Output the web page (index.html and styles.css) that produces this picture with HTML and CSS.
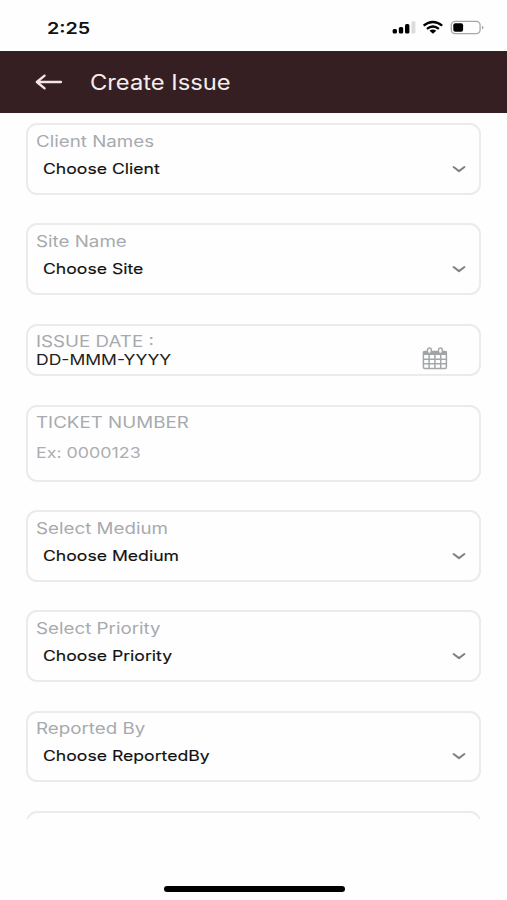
FILE: index.html
```html
<!DOCTYPE html>
<html lang="en">
<head>
<meta charset="utf-8">
<title>Create Issue</title>
<link rel="stylesheet" href="styles.css">
</head>
<body>
<div class="screen">
  <div class="status">
    <span class="time">2:25</span>
    <svg class="indicators" width="92" height="16" viewBox="0 0 92 16">
      <rect x="0.6" y="9" width="4.4" height="4.6" rx="1.5"/>
      <rect x="6.8" y="7" width="4.4" height="6.6" rx="1.5"/>
      <rect x="13" y="4" width="4.4" height="9.6" rx="1.5"/>
      <rect x="19.4" y="1.3" width="4" height="12.3" rx="1.3" fill="#dcdcdc"/>
      <g fill="none" stroke="#000" stroke-width="2.3">
        <path d="M31.6 5.6Q40.9-1.6 50.2 5.6"/>
        <path d="M34.9 8.8Q40.9 4.2 46.9 8.8"/>
      </g>
      <path d="M37.5 10.7Q40.9 8.3 44.3 10.7L40.9 13.8Z"/>
      <rect x="59.3" y="1.4" width="28.8" height="12.2" rx="3.8" fill="none" stroke="#a7a7a7" stroke-width="1.3"/>
      <rect x="61.3" y="3.2" width="9.8" height="8.6" rx="2"/>
      <path d="M90 5.7Q92.8 7.5 90 9.3Z" fill="#999"/>
    </svg>
  </div>
  <header class="bar">
    <svg class="back" width="28" height="18" viewBox="0 0 28 18"><path d="M26 9H2M9.6 2.6L1.8 9L9.6 15.4"/></svg>
    <h1 class="title">Create Issue</h1>
  </header>
  <main class="form">
    <div class="field">
      <span class="label">Client Names</span>
      <div class="select"><span class="value">Choose Client</span><svg class="chevron" width="14" height="8" viewBox="0 0 14 8"><path d="M1.6 2L7 6.1L12.4 2"/></svg></div>
    </div>
    <div class="field">
      <span class="label">Site Name</span>
      <div class="select"><span class="value">Choose Site</span><svg class="chevron" width="14" height="8" viewBox="0 0 14 8"><path d="M1.6 2L7 6.1L12.4 2"/></svg></div>
    </div>
    <div class="field date">
      <div class="date-text"><span class="label">ISSUE DATE :</span><span class="date-value">DD-MMM-YYYY</span></div>
      <svg class="calendar" width="26" height="23" viewBox="0 0 26 23">
        <rect x="1.4" y="4.6" width="23" height="16.9" rx="1.5"/>
        <path class="cal-head" d="M1 4.3H25V8H1Z"/>
        <path d="M1.4 12.2H24.4M1.4 16.8H24.4M7.1 7V21.5M12.9 7V21.5M18.7 7V21.5"/>
        <rect class="ring" x="5.5" y="1" width="3.8" height="5.4" rx="1.9"/>
        <rect class="ring" x="16.5" y="1" width="3.8" height="5.4" rx="1.9"/>
      </svg>
    </div>
    <div class="field ticket">
      <span class="label">TICKET NUMBER</span>
      <span class="placeholder">Ex: 0000123</span>
    </div>
    <div class="field">
      <span class="label">Select Medium</span>
      <div class="select"><span class="value">Choose Medium</span><svg class="chevron" width="14" height="8" viewBox="0 0 14 8"><path d="M1.6 2L7 6.1L12.4 2"/></svg></div>
    </div>
    <div class="field">
      <span class="label">Select Priority</span>
      <div class="select"><span class="value">Choose Priority</span><svg class="chevron" width="14" height="8" viewBox="0 0 14 8"><path d="M1.6 2L7 6.1L12.4 2"/></svg></div>
    </div>
    <div class="field">
      <span class="label">Reported By</span>
      <div class="select"><span class="value">Choose ReportedBy</span><svg class="chevron" width="14" height="8" viewBox="0 0 14 8"><path d="M1.6 2L7 6.1L12.4 2"/></svg></div>
    </div>
    <div class="field"></div>
  </main>
  <footer class="home"><div class="home-bar"></div></footer>
</div>
</body>
</html>
```
FILE: styles.css
```css
* { box-sizing: border-box; }
body { margin: 0; background: #fefefe; font-family: Inter, "Liberation Sans", sans-serif; }
.screen { width: 507px; height: 900px; display: flex; flex-direction: column; overflow: hidden; }
span, .title { display: block; width: max-content; white-space: nowrap; transform-origin: 0 50%; }
.status { height: 51px; flex: none; display: flex; justify-content: space-between; align-items: flex-start; padding: 20px 23px 0 47px; }
.time { font-size: 16px; line-height: 16px; font-weight: 600; transform: scaleX(1.23); color: #111; }
.bar { height: 61.5px; flex: none; display: flex; align-items: center; background: #351f22; padding: 0 0 0 35px; }
.back { fill: none; stroke: #f4e6e7; stroke-width: 2.3; stroke-linecap: round; stroke-linejoin: round; }
.title { margin: 3px 0 0 27px; font-size: 21px; line-height: 26px; font-weight: 400; color: #f6eeee; transform: scaleX(1.13); }
.form { height: 706.5px; flex: none; overflow: hidden; padding: 10.7px 26px 0 26px; display: flex; flex-direction: column; gap: 28.6px; }
.field { height: 71.6px; flex: none; border: 2px solid #ebebec; border-radius: 11px; padding: 6.7px 13px 0 8px; }
.label { font-size: 15.5px; line-height: 20px; color: #a7aaae; transform: scaleX(1.21); }
.select { display: flex; align-items: center; justify-content: space-between; padding: 8px 0 0 6.6px; }
.value { font-size: 14.5px; line-height: 18px; font-weight: 400; -webkit-text-stroke: 0.15px #111; color: #111; transform: scaleX(1.215); }
.chevron { fill: none; stroke: #808080; stroke-width: 2; stroke-linecap: round; stroke-linejoin: round; }
.date { height: 52.6px; display: flex; justify-content: space-between; padding-right: 31px; }
.date-value { font-size: 14.5px; line-height: 16px; color: #222; transform: scaleX(1.21); }
.calendar { margin-top: 14.6px; fill: none; stroke: #a3a7a9; stroke-width: 1.5; }
.calendar .cal-head { fill: #a0a4a6; stroke: none; }
.calendar .ring { fill: #fefefe; stroke-width: 1.4; }
.ticket { height: 76.8px; }
.placeholder { margin-top: 11px; font-size: 14.5px; line-height: 18px; color: #acaeb1; transform: scaleX(1.23); }
.home { flex: 1; display: flex; justify-content: center; padding-top: 67px; }
.home-bar { width: 181px; height: 5.5px; border-radius: 3px; background: #000; margin-left: 1px; }
```
